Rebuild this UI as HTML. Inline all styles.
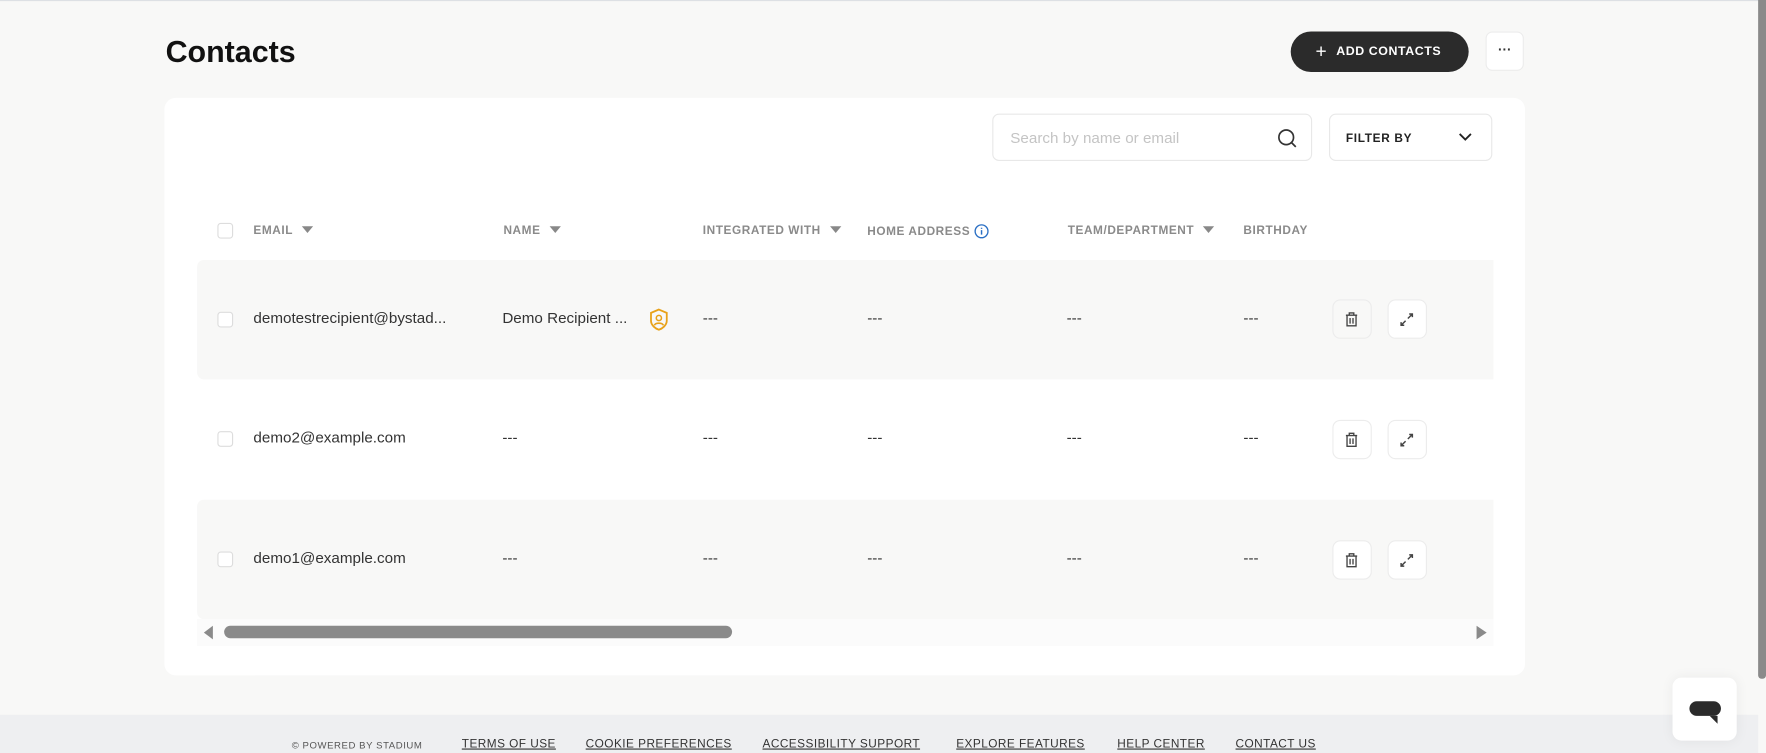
<!DOCTYPE html>
<html><head><meta charset="utf-8"><style>
*{box-sizing:border-box;margin:0;padding:0}
html,body{width:1766px;height:753px;overflow:hidden;background:#f8f8f7;font-family:"Liberation Sans",sans-serif}
#w{position:absolute;left:0;top:0;width:1568px;height:669px;transform:scale(1.12628,1.12556);transform-origin:0 0;background:#f8f8f7}
.a{position:absolute}
.h{font-size:10.5px;font-weight:bold;color:#8a8a8a;letter-spacing:.5px;top:199px}
.car{display:inline-block;width:0;height:0;border-left:5px solid transparent;border-right:5px solid transparent;border-top:6px solid #888;margin-left:8px;vertical-align:1px}
.cb{position:absolute;left:193px;width:14px;height:14px;border:1px solid #ddd;border-radius:3px;background:#fff}
.t{position:absolute;font-size:13.5px;color:#333}
.btn{position:absolute;width:35px;height:35px;background:#fff;border:1px solid #ececec;border-radius:7px}
.f{position:absolute;top:655px;font-size:10.5px;color:#333;text-decoration:underline;letter-spacing:.4px}
</style></head><body><div id="w">
<div class="a" style="left:0;top:0;width:1568px;height:1px;background:#dde0e4"></div>
<div class="a" style="left:1561px;top:0;width:7px;height:603px;background:#8a8a8a;border-radius:0 0 3px 3px"></div>
<div class="a" style="left:147px;top:31px;font-size:27px;font-weight:bold;color:#111">Contacts</div>
<div class="a" style="left:1146px;top:28px;width:158px;height:36px;background:#2b2b2b;border-radius:18px;color:#fff;font-size:11px;font-weight:bold;letter-spacing:.5px;line-height:36px;padding-left:22px"><span style="font-size:17px;font-weight:normal;vertical-align:-2px;margin-right:8px">+</span>ADD CONTACTS</div>
<div class="a" style="left:1319px;top:28px;width:34px;height:35px;background:#fff;border:1px solid #ececec;border-radius:6px;text-align:center;font-size:12px;font-weight:bold;line-height:30px;color:#333">···</div>
<div class="a" style="left:146px;top:87px;width:1208px;height:513px;background:#fff;border-radius:10px"></div>
<div class="a" style="left:881px;top:101px;width:284px;height:42px;border:1px solid #e8e8e8;border-radius:6px;font-size:13.5px;color:#c4c4c4;padding:13px 0 0 15px">Search by name or email
<svg class="a" style="left:252px;top:12px" width="18" height="18" viewBox="0 0 18 18"><circle cx="8" cy="8" r="6.5" fill="none" stroke="#333" stroke-width="1.5"/><path d="M12.5 12.5L16.5 16.5" stroke="#333" stroke-width="1.5"/></svg></div>
<div class="a" style="left:1180px;top:101px;width:145px;height:42px;border:1px solid #e8e8e8;border-radius:6px;font-size:10.5px;font-weight:bold;color:#222;letter-spacing:.6px;padding:15px 0 0 14px">FILTER BY
<svg class="a" style="left:114px;top:16px" width="12" height="8" viewBox="0 0 12 8"><path d="M1 1L6 6L11 1" fill="none" stroke="#222" stroke-width="1.6"/></svg></div>
<div class="cb" style="top:198px"></div>
<div class="a h" style="left:225px">EMAIL<span class="car"></span></div>
<div class="a h" style="left:447px">NAME<span class="car"></span></div>
<div class="a h" style="left:624px">INTEGRATED WITH<span class="car"></span></div>
<div class="a h" style="left:770px">HOME ADDRESS <svg width="13" height="13" viewBox="0 0 13 13" style="vertical-align:-3px"><circle cx="6.5" cy="6.5" r="5.7" fill="none" stroke="#2a6fc4" stroke-width="1.2"/><path d="M6.5 5.5v4M6.5 3.3v1" stroke="#2a6fc4" stroke-width="1.3"/></svg></div>
<div class="a h" style="left:948px">TEAM/DEPARTMENT<span class="car"></span></div>
<div class="a h" style="left:1104px">BIRTHDAY</div>
<div class="a" style="left:175px;top:231px;width:1151px;height:106px;background:#f8f8f7;border-radius:6px 0 0 6px"></div>
<div class="a" style="left:175px;top:444px;width:1151px;height:106px;background:#f8f8f7;border-radius:6px 0 0 6px"></div>
<div class="a" style="left:175px;top:550px;width:1151px;height:24px;background:#fbfbfb"></div>
<div class="cb" style="top:277px"></div><div class="cb" style="top:383px"></div><div class="cb" style="top:490px"></div>
<div class="t" style="left:225px;top:275px">demotestrecipient@bystad...</div>
<div class="t" style="left:446px;top:275px">Demo Recipient ...</div>
<svg class="a" style="left:576px;top:274px" width="18" height="20" viewBox="0 0 18 20"><path d="M9 1L16 4V11C16 15 12 18 9 19C6 18 2 15 2 11V4Z" fill="none" stroke="#e8a21a" stroke-width="1.6"/><circle cx="9" cy="8.5" r="2.3" fill="none" stroke="#e8a21a" stroke-width="1.4"/><path d="M5 15C6 12.5 12 12.5 13 15" fill="none" stroke="#e8a21a" stroke-width="1.4"/></svg>
<div class="t" style="left:225px;top:381px">demo2@example.com</div>
<div class="t" style="left:225px;top:488px">demo1@example.com</div>
<div class="t" style="left:446px;top:381px">---</div><div class="t" style="left:446px;top:488px">---</div>
<div class="t" style="left:624px;top:275px">---</div><div class="t" style="left:624px;top:381px">---</div><div class="t" style="left:624px;top:488px">---</div>
<div class="t" style="left:770px;top:275px">---</div><div class="t" style="left:770px;top:381px">---</div><div class="t" style="left:770px;top:488px">---</div>
<div class="t" style="left:947px;top:275px">---</div><div class="t" style="left:947px;top:381px">---</div><div class="t" style="left:947px;top:488px">---</div>
<div class="t" style="left:1104px;top:275px">---</div><div class="t" style="left:1104px;top:381px">---</div><div class="t" style="left:1104px;top:488px">---</div>
<div class="btn" style="left:1183px;top:266px;background:#f8f8f7"></div><div class="btn" style="left:1232px;top:266px"></div>
<div class="btn" style="left:1183px;top:373px"></div><div class="btn" style="left:1232px;top:373px"></div>
<div class="btn" style="left:1183px;top:480px"></div><div class="btn" style="left:1232px;top:480px"></div>
<svg class="a" style="left:0;top:0" width="1568" height="669">
<defs><g id="tr"><path d="M-5-4H5M-2-4V-6H2V-4M-4-4V5.5H4V-4M-1.3-1.5V3.5M1.3-1.5V3.5" fill="none" stroke="#444" stroke-width="1.2"/></g>
<g id="ex"><path d="M1-1L5-5M2.2-5H5V-2.2M-1 1L-5 5M-5 2.2V5H-2.2" fill="none" stroke="#444" stroke-width="1.3"/></g></defs>
<use href="#tr" x="1200" y="284"/><use href="#tr" x="1200" y="391"/><use href="#tr" x="1200" y="498"/>
<use href="#ex" x="1249" y="284"/><use href="#ex" x="1249" y="391"/><use href="#ex" x="1249" y="498"/>
<path d="M189 556L181 562L189 568Z" fill="#8a8a8a"/><path d="M1311 556L1320 562L1311 568Z" fill="#8a8a8a"/>
<rect x="199" y="556" width="451" height="11" rx="5.5" fill="#8a8a8a"/>
</svg>
<div class="a" style="left:0;top:635px;width:1561px;height:34px;background:#eeeff1"></div>
<div class="a" style="left:259px;top:657px;font-size:8.5px;color:#555;letter-spacing:.5px">© POWERED BY STADIUM</div>
<div class="f" style="left:410px">TERMS OF USE</div>
<div class="f" style="left:520px">COOKIE PREFERENCES</div>
<div class="f" style="left:677px">ACCESSIBILITY SUPPORT</div>
<div class="f" style="left:849px">EXPLORE FEATURES</div>
<div class="f" style="left:992px">HELP CENTER</div>
<div class="f" style="left:1097px">CONTACT US</div>
<div class="a" style="left:1485px;top:602px;width:57px;height:56px;background:#fff;border-radius:8px;box-shadow:0 0 12px rgba(0,0,0,.06)">
<svg class="a" style="left:14px;top:20px" width="30" height="24" viewBox="0 0 30 24"><rect x="1" y="1" width="28" height="13" rx="6.5" fill="#2b2b2b"/><path d="M19 14H26V21Z" fill="#2b2b2b"/></svg></div>
</div></body></html>
